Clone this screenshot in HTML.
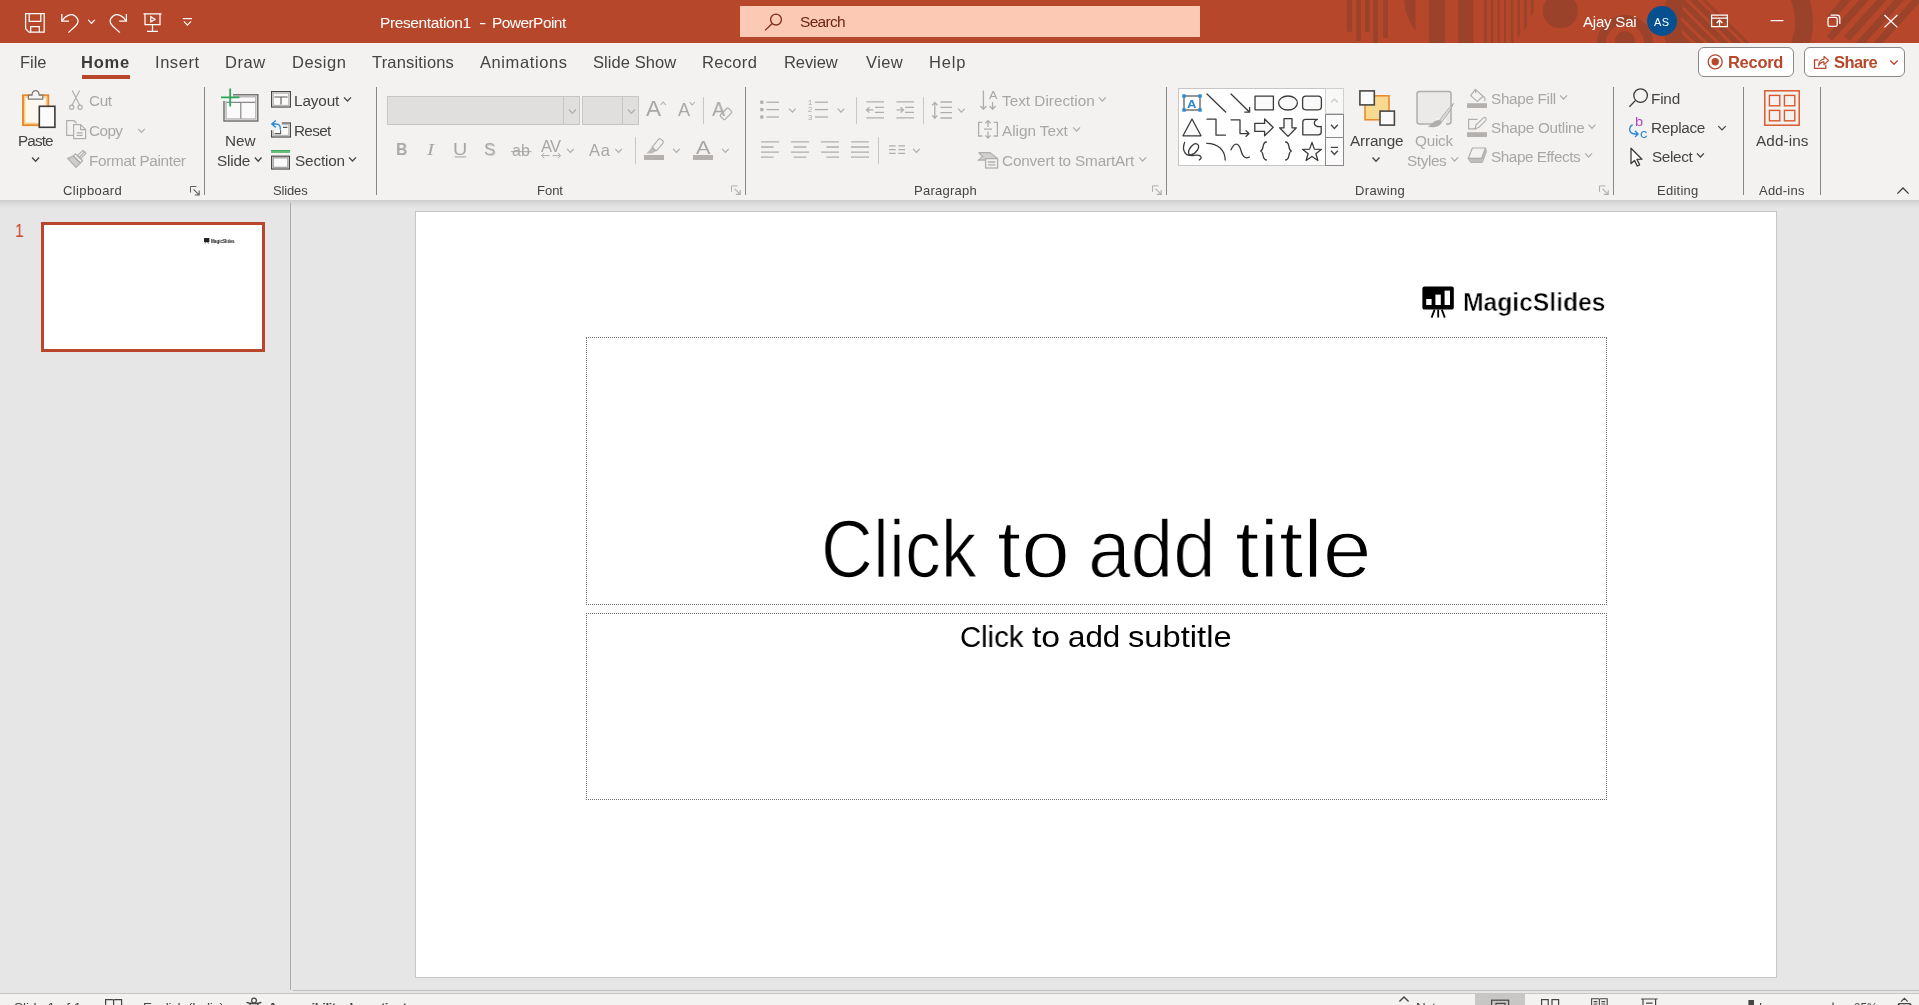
<!DOCTYPE html>
<html lang="en"><head><meta charset="utf-8"><title>Presentation1 - PowerPoint</title>
<style>
html,body{margin:0;padding:0;}
body{width:1919px;height:1005px;overflow:hidden;background:#e6e6e6;font-family:"Liberation Sans",sans-serif;}
#app{position:relative;width:1919px;height:1005px;overflow:hidden;}
.rg{position:absolute;overflow:hidden;}
.t{position:absolute;white-space:pre;line-height:1;color:#444;will-change:transform;}
.ic{position:absolute;left:0;top:0;overflow:visible;}
.bx{position:absolute;box-sizing:border-box;}

</style></head>
<body>
<div id="app">
<div id="titlebar" class="rg" style="left:0px;top:0px;width:1919px;height:43px;background:#b7472a;">
<svg class="ic" width="1919" height="43" viewBox="0 0 1919 43" ><defs><clipPath id="cpRing"><circle cx="1738" cy="22" r="57"/></clipPath></defs><g fill="#9b422b"><rect x="1346.7" y="0" width="5.3" height="31.7"/><rect x="1356.3" y="0" width="4.5" height="41"/><rect x="1365" y="0" width="4.7" height="32"/><rect x="1373.3" y="0" width="4.7" height="43"/><rect x="1383.3" y="0" width="4.7" height="38"/><path d="M1404 0 C1405 12 1409 22 1415.5 30 L1415.5 0 Z"/><rect x="1429" y="0" width="16.0" height="43"/><rect x="1458.3" y="0" width="15.0" height="43"/><rect x="1484" y="0" width="3.0" height="43"/><rect x="1490.8" y="0" width="2.5" height="43"/><rect x="1497.5" y="0" width="2.0" height="43"/><rect x="1504" y="0" width="2.0" height="43"/><rect x="1510.8" y="0" width="2.5" height="43"/><path d="M1517.5 0 H1520 V34 L1517.5 39 Z"/><path d="M1524 0 H1527 V26 L1524 31 Z"/><path d="M1530.8 0 H1533.5 V12 L1530.8 17 Z"/><circle cx="1560.3" cy="10.8" r="17.5"/><path fill-rule="evenodd" d="M1597 43 a28 28 0 0 1 56 0 Z M1606 43 a19 19 0 0 1 38 0 Z"/><circle cx="1625" cy="41" r="10"/><path fill-rule="evenodd" d="M1663 22 a75 75 0 1 0 150 0 a75 75 0 1 0 -150 0 Z M1681 22 a57 57 0 1 0 114 0 a57 57 0 1 0 -114 0 Z"/><g clip-path="url(#cpRing)"><path d="M1600 0 H1706 L1749.5 43 H1600 Z"/><path d="M1647.8 0 l4.4 0 l43.5 43 l-4.4 0 Z" fill="#b7472a"/><path d="M1660.2 0 l4.4 0 l43.5 43 l-4.4 0 Z" fill="#b7472a"/><path d="M1672.6 0 l4.4 0 l43.5 43 l-4.4 0 Z" fill="#b7472a"/><path d="M1685.0 0 l4.4 0 l43.5 43 l-4.4 0 Z" fill="#b7472a"/><path d="M1697.4 0 l4.4 0 l43.5 43 l-4.4 0 Z" fill="#b7472a"/></g><path d="M1851.9 -6 L1830.2 18" fill="none" stroke="#9b422b" stroke-width="7.2"/><path d="M1869.5 -6 L1829.3 38.5" fill="none" stroke="#9b422b" stroke-width="7.2"/><path d="M1887.1 -6 L1846.9 38.5" fill="none" stroke="#9b422b" stroke-width="7.2"/><path d="M1904.7 -6 L1855.9 48" fill="none" stroke="#9b422b" stroke-width="7.2"/><path d="M1922.3 -6 L1873.5 48" fill="none" stroke="#9b422b" stroke-width="7.2"/></g></svg>
<svg class="ic" width="1919" height="43" viewBox="0 0 1919 43" ><g fill="none" stroke="#fff" stroke-width="1.25"><path d="M25.6 13.7 H44.2 V32.2 H29 L25.6 28.8 Z" /><path d="M29.2 13.7 V21.3 H40.8 V13.7"/><path d="M30.7 32.2 V26.6 H39.3 V32.2"/><path d="M61.8 14 V21.2 H69"/><path d="M62 21 C65 15.5 71 13 75 16 C79.5 19.5 78.5 23.5 75.5 26 L68.3 32.6"/><path d="M88.20 19.80 L91.50 23.40 L94.80 19.80" fill="none" stroke="#fff" stroke-width="1.2"/><path d="M126.4 14 V21.2 H119.2"/><path d="M126.2 21 C123.2 15.5 117.2 13 113.2 16 C108.7 19.5 109.7 23.5 112.7 26 L119.9 32.6"/><path d="M143.5 13.8 H161.5 M145 14 V24.6 H160 V14 M152.5 24.6 V31.2 M147 31.4 H158"/><path d="M150.8 16.6 V21.8 L155 19.2 Z"/><path d="M182.8 18.6 H192"/><path d="M183.90 21.30 L187.40 25.10 L190.90 21.30" fill="none" stroke="#fff" stroke-width="1.2"/></g></svg>
<div class="bx" style="left:740px;top:6px;width:460px;height:31px;background:#fcc9b5;"></div>
<svg class="ic" width="1919" height="43" viewBox="0 0 1919 43" ><g fill="none" stroke="#7b2d18" stroke-width="1.3"><circle cx="776" cy="19.6" r="5.4"/><path d="M772 23.8 L765 30.4"/></g></svg>
<div class="bx" style="left:1647px;top:6px;width:30px;height:30px;border-radius:15px;background:#05508f;"></div>
<svg class="ic" width="1919" height="43" viewBox="0 0 1919 43" ><g fill="none" stroke="#fff" stroke-width="1.25"><path d="M1711.6 15.2 H1727.4 V26.6 H1711.6 Z M1711.6 18 H1727.4"/><path d="M1719.5 26 V20.4 M1716.6 23 L1719.5 20.2 L1722.4 23"/><path d="M1770.6 20.6 H1783.4"/><path d="M1828 19 a1.6 1.6 0 0 1 1.6 -1.6 H1835.6 a1.6 1.6 0 0 1 1.6 1.6 V24.8 a1.6 1.6 0 0 1 -1.6 1.6 H1829.6 a1.6 1.6 0 0 1 -1.6 -1.6 Z"/><path d="M1830.6 15.2 H1837 a2.8 2.8 0 0 1 2.8 2.8 V24"/><path d="M1884.4 15 L1897.4 27.4 M1897.4 15 L1884.4 27.4"/></g></svg>
<span class="t" style="left:380.08px;top:14px;font-size:15.5px;line-height:17px;color:#fff;letter-spacing:-0.377px;">Presentation1</span>
<span class="t" style="left:478.77px;top:14px;font-size:15.5px;line-height:17px;color:#fff;transform:scaleX(1.4270);transform-origin:0 0;">-</span>
<span class="t" style="left:492.08px;top:14px;font-size:15.5px;line-height:17px;color:#fff;letter-spacing:-0.564px;">PowerPoint</span>
<span class="t" style="left:800.25px;top:13px;font-size:15.5px;line-height:17px;color:#6a2613;letter-spacing:-0.680px;">Search</span>
<span class="t" style="left:1583.12px;top:13px;font-size:15px;line-height:17px;color:#fff;letter-spacing:-0.198px;">Ajay Sai</span>
<span class="t" style="left:1654.13px;top:16px;font-size:11px;line-height:12px;color:#fff;letter-spacing:0.453px;">AS</span>
</div>
<div id="tabs" class="rg" style="left:0px;top:43px;width:1919px;height:39px;background:#f3f2f1;">
<div class="bx" style="left:82px;top:32px;width:48px;height:4px;background:#b7472a;"></div>
<div class="bx" style="left:1698px;top:4px;width:96px;height:30px;background:#fff;border:1px solid #8a8886;border-radius:6px;"></div>
<div class="bx" style="left:1804px;top:4px;width:101px;height:30px;background:#fff;border:1px solid #8a8886;border-radius:6px;"></div>
<svg class="ic" width="1919" height="39" viewBox="0 43 1919 39" ><circle cx="1715.2" cy="61.8" r="7" fill="none" stroke="#b7472a" stroke-width="1.3"/><circle cx="1715.2" cy="61.8" r="3.7" fill="#b7472a"/><g fill="none" stroke="#b7472a" stroke-width="1.3"><path d="M1818.4 59.9 H1814.5 V68.4 H1825.8 V64.8"/><path d="M1818.6 65.8 C1818.8 61.4 1821 59.3 1824 59.2 V56.4 L1828.6 60.5 L1824 64.6 V61.9 C1821.6 61.9 1819.8 63 1818.6 65.8 Z" stroke-width="1.1" stroke-linejoin="round"/></g><path d="M1890.30 60.50 L1894.00 64.30 L1897.70 60.50" fill="none" stroke="#b7472a" stroke-width="1.3"/></svg>
<span class="t" style="left:20.10px;top:10px;font-size:16.5px;line-height:18px;letter-spacing:-0.033px;">File</span>
<span class="t" style="left:81.25px;top:10px;font-size:16.5px;line-height:18px;color:#3b3a39;font-weight:700;letter-spacing:0.808px;">Home</span>
<span class="t" style="left:154.93px;top:10px;font-size:16.5px;line-height:18px;letter-spacing:0.555px;">Insert</span>
<span class="t" style="left:225.10px;top:10px;font-size:16.5px;line-height:18px;letter-spacing:0.570px;">Draw</span>
<span class="t" style="left:292.10px;top:10px;font-size:16.5px;line-height:18px;letter-spacing:0.493px;">Design</span>
<span class="t" style="left:372.08px;top:10px;font-size:16.5px;line-height:18px;letter-spacing:0.178px;">Transitions</span>
<span class="t" style="left:480.22px;top:10px;font-size:16.5px;line-height:18px;letter-spacing:0.590px;">Animations</span>
<span class="t" style="left:592.50px;top:10px;font-size:16.5px;line-height:18px;letter-spacing:0.073px;">Slide Show</span>
<span class="t" style="left:702.00px;top:10px;font-size:16.5px;line-height:18px;letter-spacing:0.325px;">Record</span>
<span class="t" style="left:783.80px;top:10px;font-size:16.5px;line-height:18px;letter-spacing:-0.077px;">Review</span>
<span class="t" style="left:865.88px;top:10px;font-size:16.5px;line-height:18px;letter-spacing:0.422px;">View</span>
<span class="t" style="left:929.30px;top:10px;font-size:16.5px;line-height:18px;letter-spacing:0.804px;">Help</span>
<span class="t" style="left:1727.65px;top:10px;font-size:16.5px;line-height:18px;color:#b7472a;font-weight:700;letter-spacing:-0.291px;">Record</span>
<span class="t" style="left:1833.87px;top:10px;font-size:16.5px;line-height:18px;color:#b7472a;font-weight:700;letter-spacing:-0.555px;">Share</span>
</div>
<div id="ribbon" class="rg" style="left:0px;top:82px;width:1919px;height:118px;background:#f3f2f1;">
<div class="bx" style="left:204.0px;top:4.5px;width:1px;height:108.5px;background:#8a8886;"></div>
<div class="bx" style="left:376.0px;top:4.5px;width:1px;height:108.5px;background:#8a8886;"></div>
<div class="bx" style="left:745.0px;top:4.5px;width:1px;height:108.5px;background:#8a8886;"></div>
<div class="bx" style="left:1166.0px;top:4.5px;width:1px;height:108.5px;background:#8a8886;"></div>
<div class="bx" style="left:1613.0px;top:4.5px;width:1px;height:108.5px;background:#8a8886;"></div>
<div class="bx" style="left:1743.0px;top:4.5px;width:1px;height:108.5px;background:#8a8886;"></div>
<div class="bx" style="left:1820.0px;top:4.5px;width:1px;height:108.5px;background:#8a8886;"></div>
<div class="bx" style="left:703.0px;top:15px;width:1px;height:27px;background:#c8c6c4;"></div>
<div class="bx" style="left:635.0px;top:55px;width:1px;height:27px;background:#c8c6c4;"></div>
<div class="bx" style="left:856.0px;top:15px;width:1px;height:27px;background:#c8c6c4;"></div>
<div class="bx" style="left:923.0px;top:15px;width:1px;height:27px;background:#c8c6c4;"></div>
<div class="bx" style="left:878.0px;top:55px;width:1px;height:27px;background:#c8c6c4;"></div>
<svg class="ic" width="1919" height="118" viewBox="0 82 1919 118" ><rect x="23" y="95.3" width="25.2" height="29.8" fill="#fdf8ef" stroke="#e8892a" stroke-width="2"/><rect x="24.7" y="97" width="21.8" height="26.4" fill="none" stroke="#f9cf8e" stroke-width="1.5"/><path d="M28.4 99.2 V95.2 H32 C32.2 92.4 33.6 90.7 35.6 90.7 C37.6 90.7 39 92.4 39.2 95.2 H42.8 V99.2 Z" fill="#f6f5f4" stroke="#7a7876" stroke-width="1.2"/><rect x="39.3" y="106.3" width="15.6" height="21" fill="#fafafa" stroke="#3b3a39" stroke-width="1.6"/><path d="M32.10 157.50 L35.60 161.30 L39.10 157.50" fill="none" stroke="#444" stroke-width="1.3"/><g fill="none" stroke="#b0aeac" stroke-width="1.2"><path d="M72.2 90.4 L79.6 105 M79.6 90.4 L72.2 105"/><circle cx="71.7" cy="107.2" r="2.1"/><circle cx="80.1" cy="107.2" r="2.1"/></g><g fill="none" stroke="#b0aeac" stroke-width="1.2"><path d="M73.2 135.4 H66.7 V120.7 H74 L76.6 123.2"/><path d="M73.6 124.6 H80.6 L85.6 129.6 V138.6 H73.6 Z" fill="#f3f2f1"/><path d="M80.6 124.6 V129.6 H85.6 M76.6 132.8 H82.6 M76.6 135.4 H82.6"/></g><path d="M138.20 128.80 L141.50 132.40 L144.80 128.80" fill="none" stroke="#b0aeac" stroke-width="1.2"/><g fill="none" stroke="#b0aeac" stroke-width="1.2" stroke-linejoin="round"><path d="M85.2 151.2 L79.6 157 M83 150.4 L86 153.2 L80.8 158.6 L77.6 155.4 Z"/><path d="M75.4 153.8 L82.6 160.8 L80.4 163 L73.2 156 Z"/><path d="M73.2 156 L67.6 158.4 L76 167.4 L80.4 163 Z" fill="#b0aeac" fill-opacity="0.55"/></g><path d="M190.5 192.5 V186.5 H196.5" fill="none" stroke="#605e5c" stroke-width="1"/><path d="M193.6 189.4 L199 194.8 M194.8 195 H199.2 V190.6" fill="none" stroke="#605e5c" stroke-width="1.1"/><rect x="224" y="94.8" width="33.8" height="26.2" fill="#fafafa" stroke="#6b6967" stroke-width="1.4"/><rect x="226" y="96.8" width="29.8" height="22.2" fill="none" stroke="#b3b1af" stroke-width="1.3"/><path d="M226.6 102.4 H255.2 M240.8 102.4 V118.6" fill="none" stroke="#8a8886" stroke-width="1.2"/><rect x="221" y="89" width="12" height="12" fill="#f3f2f1"/><path d="M230.2 88.6 V106.6 M221 97.4 H239.4" fill="none" stroke="#2ea55b" stroke-width="1.8"/><path d="M254.90 157.50 L258.20 161.30 L261.50 157.50" fill="none" stroke="#444" stroke-width="1.3"/><rect x="271.6" y="91.6" width="18.8" height="15.4" fill="#fafafa" stroke="#4a4846" stroke-width="1.2"/><rect x="273.2" y="93.2" width="15.6" height="12.2" fill="none" stroke="#b5b3b1" stroke-width="1.1"/><path d="M274.4 97 H287.6 M281 97 V104.6" fill="none" stroke="#5c5a58" stroke-width="1.1"/><path d="M344.00 97.40 L347.50 101.00 L351.00 97.40" fill="none" stroke="#444" stroke-width="1.3"/><rect x="271.6" y="123" width="18.8" height="14" fill="#fafafa" stroke="#4a4846" stroke-width="1.2"/><rect x="273.2" y="124.6" width="15.6" height="10.8" fill="none" stroke="#b5b3b1" stroke-width="1.1"/><path d="M283 127.4 H287.4 M274.6 133.6 H280.6 V130" fill="none" stroke="#5c5a58" stroke-width="1.1"/><rect x="270.4" y="119.4" width="11.4" height="10.8" fill="#f3f2f1"/><path d="M275.8 120.4 L271.8 124 L275.8 127.4 M272.2 124 H276.4 C279 124 280.6 126 280.4 129.6" fill="none" stroke="#2b88d8" stroke-width="1.4"/><rect x="271" y="150" width="19" height="3" fill="#6bbf7b"/><rect x="271" y="150" width="19" height="1" fill="#3fa557"/><rect x="271.6" y="156.2" width="17.8" height="12.8" fill="#fafafa" stroke="#4a4846" stroke-width="1.2"/><rect x="273.2" y="157.8" width="14.6" height="9.6" fill="none" stroke="#a5a3a1" stroke-width="1.3"/><path d="M349.00 157.40 L352.50 161.00 L356.00 157.40" fill="none" stroke="#444" stroke-width="1.3"/></svg>
<div class="bx" style="left:387px;top:14px;width:193px;height:29px;background:#e1dfdd;border:1px solid #c8c6c4;"></div>
<div class="bx" style="left:563px;top:15px;width:1px;height:27px;background:#c8c6c4;"></div>
<div class="bx" style="left:582px;top:14px;width:57px;height:29px;background:#e1dfdd;border:1px solid #c8c6c4;"></div>
<div class="bx" style="left:622px;top:15px;width:1px;height:27px;background:#c8c6c4;"></div>
<svg class="ic" width="1919" height="118" viewBox="0 82 1919 118" ><path d="M568.90 109.50 L572.40 113.30 L575.90 109.50" fill="none" stroke="#b0aeac" stroke-width="1.2"/><path d="M627.90 109.50 L631.40 113.30 L634.90 109.50" fill="none" stroke="#b0aeac" stroke-width="1.2"/><path d="M660.6 105 L663.2 102 L665.8 105" fill="none" stroke="#b0aeac" stroke-width="1.1"/><path d="M689.6 102 L692.2 105 L694.8 102" fill="none" stroke="#b0aeac" stroke-width="1.1"/><rect x="720.4" y="110.6" width="11.2" height="6.4" rx="1" transform="rotate(-45 726 113.8)" fill="#f3f2f1" stroke="#b0aeac" stroke-width="1.2"/><path d="M454.6 156.9 H466.2" stroke="#b0aeac" stroke-width="1.2"/><path d="M511 151.6 H531.4" stroke="#b0aeac" stroke-width="1.1"/><path d="M541.6 155.6 H549.6 M552.6 155.6 H560.6 M544.2 153 L541.6 155.6 L544.2 158.2 M558 153 L560.6 155.6 L558 158.2" fill="none" stroke="#b0aeac" stroke-width="1"/><path d="M567.10 148.80 L570.40 152.40 L573.70 148.80" fill="none" stroke="#b0aeac" stroke-width="1.2"/><path d="M615.30 148.80 L618.60 152.40 L621.90 148.80" fill="none" stroke="#b0aeac" stroke-width="1.2"/><rect x="644" y="155" width="20" height="5" fill="#b3b0ad"/><rect x="651.6" y="141.8" width="12.4" height="5.8" rx="1.6" transform="rotate(-50 657.8 144.7)" fill="#f3f2f1" stroke="#b0aeac" stroke-width="1.1"/><path d="M652.6 146.6 L656.8 150.4 L652 153.6 L646.4 153.6 Z" fill="#b0aeac" fill-opacity="0.8"/><path d="M673.10 148.80 L676.40 152.40 L679.70 148.80" fill="none" stroke="#b0aeac" stroke-width="1.2"/><rect x="693" y="155" width="20" height="5" fill="#b3b0ad"/><path d="M722.10 148.80 L725.40 152.40 L728.70 148.80" fill="none" stroke="#b0aeac" stroke-width="1.2"/><path d="M731.5 191.9 V185.9 H737.5" fill="none" stroke="#b0aeac" stroke-width="1"/><path d="M734.6 188.8 L740 194.20000000000002 M735.8 194.4 H740.2 V190.0" fill="none" stroke="#b0aeac" stroke-width="1.1"/></svg>
<svg class="ic" width="1919" height="118" viewBox="0 82 1919 118" ><rect x="760.2" y="100.60000000000001" width="3.2" height="3.2" fill="#b0aeac"/><path d="M766.4 102.2 H779" fill="none" stroke="#b0aeac" stroke-width="1.3"/><rect x="760.2" y="108.0" width="3.2" height="3.2" fill="#b0aeac"/><path d="M766.4 109.6 H779" fill="none" stroke="#b0aeac" stroke-width="1.3"/><rect x="760.2" y="115.4" width="3.2" height="3.2" fill="#b0aeac"/><path d="M766.4 117 H779" fill="none" stroke="#b0aeac" stroke-width="1.3"/><path d="M789.10 108.60 L792.40 112.20 L795.70 108.60" fill="none" stroke="#b0aeac" stroke-width="1.2"/><path d="M815 102.2 H828" fill="none" stroke="#b0aeac" stroke-width="1.3"/><path d="M815 109.6 H828" fill="none" stroke="#b0aeac" stroke-width="1.3"/><path d="M815 117 H828" fill="none" stroke="#b0aeac" stroke-width="1.3"/><path d="M837.70 108.60 L841.00 112.20 L844.30 108.60" fill="none" stroke="#b0aeac" stroke-width="1.2"/><path d="M866.4 101.8 H884 M875 107.4 H884 M875 112.4 H884 M866.4 117.8 H884 M866.6 109.9 H873.4 M869.4 107.2 L866.6 109.9 L869.4 112.6" fill="none" stroke="#b0aeac" stroke-width="1.3"/><path d="M896.4 101.8 H914 M905 107.4 H914 M905 112.4 H914 M896.4 117.8 H914 M896.6 109.9 H903.4 M900.6 107.2 L903.4 109.9 L900.6 112.6" fill="none" stroke="#b0aeac" stroke-width="1.3"/><path d="M940.4 102 H952 M940.4 107.4 H952 M940.4 112.6 H952 M940.4 118 H952 M934.8 102.6 V118 M932.2 105.2 L934.8 102.4 L937.4 105.2 M932.2 115.4 L934.8 118.2 L937.4 115.4" fill="none" stroke="#b0aeac" stroke-width="1.3"/><path d="M958.10 108.60 L961.40 112.20 L964.70 108.60" fill="none" stroke="#b0aeac" stroke-width="1.2"/><path d="M761 141.9 H779 M761 147.0 H773.6 M761 152.1 H779 M761 157.2 H773.6" fill="none" stroke="#b0aeac" stroke-width="1.3"/><path d="M791 141.9 H809 M793.6 147.0 H806.4 M791 152.1 H809 M793.6 157.2 H806.4" fill="none" stroke="#b0aeac" stroke-width="1.3"/><path d="M821 141.9 H839 M826.4 147.0 H839 M821 152.1 H839 M826.4 157.2 H839" fill="none" stroke="#b0aeac" stroke-width="1.3"/><path d="M851 141.9 H869 M851 147.0 H869 M851 152.1 H869 M851 157.2 H869" fill="none" stroke="#b0aeac" stroke-width="1.3"/><path d="M889 145.8 H895.6 M898.4 145.8 H905 M889 149.6 H895.6 M898.4 149.6 H905 M889 153.4 H895.6 M898.4 153.4 H905" fill="none" stroke="#b0aeac" stroke-width="1.3"/><path d="M913.10 148.80 L916.40 152.40 L919.70 148.80" fill="none" stroke="#b0aeac" stroke-width="1.2"/><path d="M983.4 90.6 V109 M980.4 106 L983.4 109.2 L986.4 106 M992.6 102 V109 M989.6 106 L992.6 109.2 L995.6 106" fill="none" stroke="#b0aeac" stroke-width="1.3"/><path d="M1098.90 97.40 L1102.40 101.00 L1105.90 97.40" fill="none" stroke="#b0aeac" stroke-width="1.3"/><path d="M982.4 122.4 H978.6 V136 H982.4 M993.6 122.4 H997.4 V136 H993.6 M984 129.2 H992 M988 120.6 V127 M985.4 123.2 L988 120.6 L990.6 123.2 M988 131.4 V138 M985.4 135.4 L988 138 L990.6 135.4" fill="none" stroke="#b0aeac" stroke-width="1.3"/><path d="M1073.10 127.40 L1076.60 131.00 L1080.10 127.40" fill="none" stroke="#b0aeac" stroke-width="1.3"/><path d="M978.6 152.6 H990 L997.4 158.6 M978.8 152.8 L982.6 156.4 L978.6 160 H985" fill="none" stroke="#b0aeac" stroke-width="1.3"/><path d="M979.4 153 H989.8 L996 158.2 H985.4 V160 H980 L983.2 156.4 Z" fill="#b0aeac" fill-opacity="0.5"/><rect x="985.6" y="158.6" width="12" height="9.4" fill="#f3f2f1" stroke="#b0aeac" stroke-width="1.3"/><path d="M988 162 H995.4 M988 164.8 H995.4" fill="none" stroke="#b0aeac" stroke-width="1.3"/><path d="M1139.10 157.40 L1142.60 161.00 L1146.10 157.40" fill="none" stroke="#b0aeac" stroke-width="1.3"/><path d="M1152.5 191.9 V185.9 H1158.5" fill="none" stroke="#b0aeac" stroke-width="1"/><path d="M1155.6 188.8 L1161 194.20000000000002 M1156.8 194.4 H1161.2 V190.0" fill="none" stroke="#b0aeac" stroke-width="1.1"/></svg>
<div class="bx" style="left:1178px;top:6px;width:166px;height:78px;background:#fff;border:1px solid #c8c6c4;"></div>
<div class="bx" style="left:1325px;top:6px;width:19px;height:26px;background:#f8f8f7;border:1px solid #d2d0ce;"></div>
<div class="bx" style="left:1325px;top:32px;width:19px;height:24px;background:#fafafa;border:1px solid #8a8886;"></div>
<div class="bx" style="left:1325px;top:55px;width:19px;height:29px;background:#fafafa;border:1px solid #8a8886;"></div>
<svg class="ic" width="1919" height="118" viewBox="0 82 1919 118" ><path d="M1331 102.4 L1334.4 99 L1337.8 102.4" fill="none" stroke="#c8c6c4" stroke-width="1.2"/><path d="M1331.00 124.70 L1334.40 128.50 L1337.80 124.70" fill="none" stroke="#444" stroke-width="1.3"/><path d="M1330.8 147.4 H1338" fill="none" stroke="#444" stroke-width="1.2"/><path d="M1331.00 150.70 L1334.40 154.50 L1337.80 150.70" fill="none" stroke="#444" stroke-width="1.3"/><rect x="1184" y="96" width="16" height="14" fill="#fff" stroke="#605e5c" stroke-width="1.3"/><rect x="1182.3" y="94.3" width="3.4" height="3.4" fill="#2b88d8"/><rect x="1198.3" y="94.3" width="3.4" height="3.4" fill="#2b88d8"/><rect x="1182.3" y="108.3" width="3.4" height="3.4" fill="#2b88d8"/><rect x="1198.3" y="108.3" width="3.4" height="3.4" fill="#2b88d8"/><path d="M1207 94 L1225.6 112" fill="none" stroke="#3b3a39" stroke-width="1.3" stroke-linecap="round" stroke-linejoin="round"/><path d="M1231 94 L1249.4 112 M1244.8 112.2 H1249.6 V107.4" fill="none" stroke="#3b3a39" stroke-width="1.3" stroke-linecap="round" stroke-linejoin="round"/><rect x="1255" y="96.2" width="18.4" height="13.6" fill="#fafafa" stroke="#3b3a39" stroke-width="1.3" stroke-linejoin="round"/><ellipse cx="1288" cy="103" rx="9.4" ry="7" fill="#fafafa" stroke="#3b3a39" stroke-width="1.3" stroke-linejoin="round"/><rect x="1302.6" y="96.2" width="18.8" height="13.6" rx="3.2" fill="#fafafa" stroke="#3b3a39" stroke-width="1.3" stroke-linejoin="round"/><path d="M1192 119 L1201 135.8 H1183 Z" fill="#fafafa" stroke="#3b3a39" stroke-width="1.3" stroke-linejoin="round"/><path d="M1207 119.2 H1216 V135.2 H1225.4" fill="none" stroke="#3b3a39" stroke-width="1.3" stroke-linecap="round" stroke-linejoin="round"/><path d="M1231 119.8 H1240 V133.6 H1248.6 M1246 130.8 L1249 133.6 L1246 136.4" fill="none" stroke="#3b3a39" stroke-width="1.3" stroke-linecap="round" stroke-linejoin="round"/><path d="M1254.8 123.4 H1264.6 V119 L1273.2 127.4 L1264.6 135.8 V131.4 H1254.8 Z" fill="#fafafa" stroke="#3b3a39" stroke-width="1.3" stroke-linejoin="round"/><path d="M1284 118.6 H1292 V127.8 H1296.4 L1288 136.4 L1279.6 127.8 H1284 Z" fill="#fafafa" stroke="#3b3a39" stroke-width="1.3" stroke-linejoin="round"/><path d="M1302.8 122.2 Q1302.8 119.4 1305.6 119.4 H1317.4 C1312.4 121.6 1313.6 127.6 1321.2 126.4 V132 Q1321.2 134.8 1318.4 134.8 H1302.8 Z" fill="#fafafa" stroke="#3b3a39" stroke-width="1.3" stroke-linejoin="round"/><path d="M1184.6 142.4 C1181.6 150 1185.4 156.4 1190.6 155 C1196.8 153.2 1200.6 146.6 1197.4 144.2 C1194.4 142 1188.2 148.2 1188.6 152.8 C1189 158.6 1197 152.8 1200.6 156.2 C1202 157.6 1200.4 159.4 1199.2 160" fill="none" stroke="#3b3a39" stroke-width="1.3" stroke-linecap="round" stroke-linejoin="round"/><path d="M1206.8 143.4 C1218 143.6 1225 150 1225.2 160" fill="none" stroke="#3b3a39" stroke-width="1.3" stroke-linecap="round" stroke-linejoin="round"/><path d="M1231 149.8 C1234.4 142 1238.6 142.4 1240.8 150 C1243 158.2 1246.4 159 1249.4 157" fill="none" stroke="#3b3a39" stroke-width="1.3" stroke-linecap="round" stroke-linejoin="round"/><path d="M1266.4 142 C1261.6 142 1264.6 149.4 1260.6 151 C1264.6 152.6 1261.6 160 1266.4 160" fill="none" stroke="#3b3a39" stroke-width="1.3" stroke-linecap="round" stroke-linejoin="round"/><path d="M1285.6 142 C1290.4 142 1287.4 149.4 1291.4 151 C1287.4 152.6 1290.4 160 1285.6 160" fill="none" stroke="#3b3a39" stroke-width="1.3" stroke-linecap="round" stroke-linejoin="round"/><path d="M1312.0 142.4 L1314.4 149.1 L1321.5 149.3 L1315.9 153.7 L1317.9 160.5 L1312.0 156.5 L1306.1 160.5 L1308.1 153.7 L1302.5 149.3 L1309.6 149.1 Z" fill="#fafafa" stroke="#3b3a39" stroke-width="1.3" stroke-linejoin="round"/><rect x="1365" y="95.8" width="24" height="24" fill="#f9d88f" stroke="#e8852a" stroke-width="1.5"/><rect x="1359.9" y="90.9" width="14.4" height="14" fill="#fafafa" stroke="#4a4846" stroke-width="1.6"/><rect x="1380" y="111.1" width="14.4" height="14" fill="#fafafa" stroke="#4a4846" stroke-width="1.6"/><path d="M1372.50 157.50 L1376.00 161.30 L1379.50 157.50" fill="none" stroke="#444" stroke-width="1.3"/><rect x="1417" y="91.4" width="34" height="32.6" rx="2.4" fill="#ebeae9" stroke="#b0aeac" stroke-width="1.5"/><rect x="1436" y="118" width="10" height="8" fill="#f3f2f1"/><path d="M1453.4 103.4 C1449 108 1443.6 114.6 1439.6 120.4 L1441.6 122 C1446 116.6 1451.4 109.6 1453.4 103.4 Z" fill="#dddbd9" stroke="#b0aeac" stroke-width="1"/><path d="M1439.4 119.8 L1442 122 C1440.4 126.4 1433.6 128.6 1427.4 126.6 C1431.8 125.4 1432.2 120.6 1439.4 119.8 Z" fill="#b0aeac"/><path d="M1451.10 157.40 L1454.60 161.00 L1458.10 157.40" fill="none" stroke="#b0aeac" stroke-width="1.3"/><rect x="1467" y="103.2" width="20" height="4.8" fill="#b3b0ad"/><path d="M1475.4 89.4 L1483 96.2 L1477.4 101.4 L1470.6 95.6 Z M1475.6 89.4 V93 M1483 96.2 C1485 97.2 1485.4 99 1484.6 101" fill="none" stroke="#b0aeac" stroke-width="1.2" stroke-linejoin="round"/><path d="M1560.10 95.40 L1563.60 99.00 L1567.10 95.40" fill="none" stroke="#b0aeac" stroke-width="1.3"/><rect x="1467" y="132.2" width="20" height="4.8" fill="#b3b0ad"/><path d="M1476.6 128.8 H1468.6 V119.4 H1477.6" fill="none" stroke="#b0aeac" stroke-width="1.2"/><path d="M1475 128.8 L1476 125 L1483.4 117.8 Q1484.6 116.8 1485.8 118 Q1486.8 119.2 1485.8 120.4 L1478.6 127.6 Z" fill="#f3f2f1" stroke="#b0aeac" stroke-width="1.1" stroke-linejoin="round"/><path d="M1588.50 124.60 L1592.00 128.20 L1595.50 124.60" fill="none" stroke="#b0aeac" stroke-width="1.3"/><path d="M1472.4 148 H1485.6 L1481.6 158.4 H1468.2 Z" fill="#f3f2f1" stroke="#b0aeac" stroke-width="1.2" stroke-linejoin="round"/><path d="M1468.2 158.4 H1481.6 L1485.6 148 L1486.4 151.6 L1482.4 162.4 H1470.6 Z" fill="#b0aeac" fill-opacity="0.75" stroke="#b0aeac" stroke-width="1" stroke-linejoin="round"/><path d="M1585.10 153.40 L1588.60 157.00 L1592.10 153.40" fill="none" stroke="#b0aeac" stroke-width="1.3"/><path d="M1599.5 191.9 V185.9 H1605.5" fill="none" stroke="#b0aeac" stroke-width="1"/><path d="M1602.6 188.8 L1608 194.20000000000002 M1603.8 194.4 H1608.2 V190.0" fill="none" stroke="#b0aeac" stroke-width="1.1"/></svg>
<svg class="ic" width="1919" height="118" viewBox="0 82 1919 118" ><circle cx="1640.6" cy="95.6" r="6.8" fill="none" stroke="#3b3a39" stroke-width="1.3"/><path d="M1635.6 100.4 L1629.4 106.8" fill="none" stroke="#3b3a39" stroke-width="1.3"/><path d="M1632.6 124.6 C1629.4 126.4 1628.6 130.4 1631 132.6 C1632.4 133.8 1634 134 1637.6 134 M1635 130.8 L1638 134 L1635 137" fill="none" stroke="#2b88d8" stroke-width="1.4"/><path d="M1631 148.2 V163.6 L1634.6 160.4 L1637.2 166 L1639.6 164.8 L1637 159.4 L1642 159.2 Z" fill="#fff" stroke="#3b3a39" stroke-width="1.3" stroke-linejoin="round"/><path d="M1718.30 126.10 L1722.00 129.90 L1725.70 126.10" fill="none" stroke="#444" stroke-width="1.3"/><path d="M1696.90 153.40 L1700.40 157.00 L1703.90 153.40" fill="none" stroke="#444" stroke-width="1.3"/><rect x="1764.8" y="90.8" width="34.4" height="34.4" fill="none" stroke="#d85a2c" stroke-width="1.5"/><rect x="1769.4" y="95.4" width="10.4" height="10.4" fill="none" stroke="#d85a2c" stroke-width="1.4"/><rect x="1784.4" y="95.4" width="10.4" height="10.4" fill="none" stroke="#d85a2c" stroke-width="1.4"/><rect x="1769.4" y="110.4" width="10.4" height="10.4" fill="none" stroke="#d85a2c" stroke-width="1.4"/><rect x="1784.4" y="110.4" width="10.4" height="10.4" fill="none" stroke="#d85a2c" stroke-width="1.4"/><path d="M1897.4 193.6 L1903 188 L1908.6 193.6" fill="none" stroke="#3b3a39" stroke-width="1.3"/></svg>
<span class="t" style="left:18.09px;top:50px;font-size:15.3px;line-height:17px;letter-spacing:-0.895px;">Paste</span>
<span class="t" style="left:89.37px;top:10px;font-size:15.3px;line-height:17px;color:#a9a7a5;letter-spacing:-0.358px;">Cut</span>
<span class="t" style="left:89.37px;top:40px;font-size:15.3px;line-height:17px;color:#a9a7a5;letter-spacing:-0.568px;">Copy</span>
<span class="t" style="left:89.19px;top:70px;font-size:15.3px;line-height:17px;color:#a9a7a5;letter-spacing:-0.327px;">Format Painter</span>
<span class="t" style="left:62.69px;top:101px;font-size:13px;line-height:15px;letter-spacing:0.394px;">Clipboard</span>
<span class="t" style="left:225.19px;top:50px;font-size:15.3px;line-height:17px;letter-spacing:0.008px;">New</span>
<span class="t" style="left:216.76px;top:70px;font-size:15.3px;line-height:17px;letter-spacing:-0.185px;">Slide</span>
<span class="t" style="left:294.19px;top:10px;font-size:15.3px;line-height:17px;letter-spacing:-0.132px;">Layout</span>
<span class="t" style="left:294.19px;top:40px;font-size:15.3px;line-height:17px;letter-spacing:-0.673px;">Reset</span>
<span class="t" style="left:294.76px;top:70px;font-size:15.3px;line-height:17px;letter-spacing:-0.156px;">Section</span>
<span class="t" style="left:272.66px;top:101px;font-size:13px;line-height:15px;letter-spacing:-0.149px;">Slides</span>
<span class="t" style="left:395.50px;top:58px;font-size:17px;line-height:19px;color:#a9a7a5;font-weight:700;transform:scaleX(0.9260);transform-origin:0 0;">B</span>
<span class="t" style="left:427.23px;top:58px;font-size:17px;line-height:19px;color:#a9a7a5;transform:scaleX(1.2516);transform-origin:0 0;font-family:'Liberation Serif',serif;font-style:italic;">I</span>
<span class="t" style="left:453.43px;top:58px;font-size:16.5px;line-height:18px;color:#a9a7a5;transform:scaleX(1.1953);transform-origin:0 0;">U</span>
<span class="t" style="left:484.39px;top:58px;font-size:17px;line-height:19px;color:#a9a7a5;transform:scaleX(0.9809);transform-origin:0 0;text-shadow:1px 1px 0 #d2d0ce;">S</span>
<span class="t" style="left:512.47px;top:60px;font-size:16px;line-height:17px;color:#a9a7a5;letter-spacing:0.155px;">ab</span>
<span class="t" style="left:541.32px;top:55px;font-size:16.5px;line-height:18px;color:#a9a7a5;letter-spacing:-0.681px;">AV</span>
<span class="t" style="left:589.12px;top:59px;font-size:16.5px;line-height:18px;color:#a9a7a5;letter-spacing:0.850px;">Aa</span>
<span class="t" style="left:646.11px;top:15px;font-size:21.5px;line-height:24px;color:#a9a7a5;transform:scaleX(1.0522);transform-origin:0 0;">A</span>
<span class="t" style="left:678.11px;top:18px;font-size:17.5px;line-height:20px;color:#a9a7a5;transform:scaleX(1.0341);transform-origin:0 0;">A</span>
<span class="t" style="left:712.11px;top:15px;font-size:21px;line-height:23px;color:#a9a7a5;transform:scaleX(0.9336);transform-origin:0 0;">A</span>
<span class="t" style="left:696.11px;top:55px;font-size:18.5px;line-height:21px;color:#a9a7a5;transform:scaleX(1.1739);transform-origin:0 0;">A</span>
<span class="t" style="left:537.48px;top:101px;font-size:13px;line-height:15px;letter-spacing:-0.017px;">Font</span>
<span class="t" style="left:807.78px;top:16px;font-size:7.5px;line-height:9px;color:#a9a7a5;">1</span>
<span class="t" style="left:807.97px;top:23px;font-size:7.5px;line-height:9px;color:#a9a7a5;">2</span>
<span class="t" style="left:808.06px;top:31px;font-size:7.5px;line-height:9px;color:#a9a7a5;">3</span>
<span class="t" style="left:988.73px;top:7px;font-size:11.5px;line-height:12px;color:#a9a7a5;transform:scaleX(1.1016);transform-origin:0 0;">A</span>
<span class="t" style="left:1002.11px;top:10px;font-size:15.3px;line-height:17px;color:#a9a7a5;letter-spacing:0.006px;">Text Direction</span>
<span class="t" style="left:1002.42px;top:40px;font-size:15.3px;line-height:17px;color:#a9a7a5;letter-spacing:-0.031px;">Align Text</span>
<span class="t" style="left:1001.67px;top:70px;font-size:15.3px;line-height:17px;color:#a9a7a5;letter-spacing:-0.160px;">Convert to SmartArt</span>
<span class="t" style="left:913.88px;top:101px;font-size:13px;line-height:15px;letter-spacing:0.263px;">Paragraph</span>
<span class="t" style="left:1187.42px;top:16px;font-size:11.5px;line-height:12px;color:#2b88d8;font-weight:700;transform:scaleX(1.1406);transform-origin:0 0;">A</span>
<span class="t" style="left:1349.92px;top:50px;font-size:15.3px;line-height:17px;letter-spacing:-0.135px;">Arrange</span>
<span class="t" style="left:1415.23px;top:50px;font-size:15.3px;line-height:17px;color:#a9a7a5;letter-spacing:-0.250px;">Quick</span>
<span class="t" style="left:1407.26px;top:70px;font-size:15.3px;line-height:17px;color:#a9a7a5;letter-spacing:-0.402px;">Styles</span>
<span class="t" style="left:1490.76px;top:8px;font-size:15.3px;line-height:17px;color:#a9a7a5;letter-spacing:-0.323px;">Shape Fill</span>
<span class="t" style="left:1490.76px;top:37px;font-size:15.3px;line-height:17px;color:#a9a7a5;letter-spacing:-0.265px;">Shape Outline</span>
<span class="t" style="left:1490.76px;top:66px;font-size:15.3px;line-height:17px;color:#a9a7a5;letter-spacing:-0.443px;">Shape Effects</span>
<span class="t" style="left:1354.88px;top:101px;font-size:13px;line-height:15px;letter-spacing:0.353px;">Drawing</span>
<span class="t" style="left:1634.60px;top:33px;font-size:12.5px;line-height:14px;color:#b146c2;transform:scaleX(1.1741);transform-origin:0 0;">b</span>
<span class="t" style="left:1639.52px;top:45px;font-size:12.5px;line-height:14px;color:#2b88d8;transform:scaleX(1.1875);transform-origin:0 0;">c</span>
<span class="t" style="left:1651.19px;top:8px;font-size:15.3px;line-height:17px;letter-spacing:-0.205px;">Find</span>
<span class="t" style="left:1651.19px;top:37px;font-size:15.3px;line-height:17px;letter-spacing:-0.298px;">Replace</span>
<span class="t" style="left:1651.76px;top:66px;font-size:15.3px;line-height:17px;letter-spacing:-0.362px;">Select</span>
<span class="t" style="left:1657.38px;top:101px;font-size:13px;line-height:15px;letter-spacing:0.259px;">Editing</span>
<span class="t" style="left:1756.42px;top:50px;font-size:15.3px;line-height:17px;letter-spacing:0.103px;">Add-ins</span>
<span class="t" style="left:1758.92px;top:101px;font-size:13px;line-height:15px;letter-spacing:0.219px;">Add-ins</span>
</div>
<div id="work" class="rg" style="left:0px;top:200px;width:1919px;height:793px;background:#e6e6e6;">
<div class="bx" style="left:0;top:0;width:1919px;height:9px;background:linear-gradient(#cecdcc,#d9d9d9 35%,#e2e2e2 70%,#e6e6e6);"></div>
<div class="bx" style="left:290px;top:3px;width:1px;height:787px;background:#ababab;"></div>
<div class="bx" style="left:293px;top:790px;width:1626px;height:1px;background:#c0c0c0;"></div>
<div class="bx" style="left:41px;top:22px;width:224px;height:130px;background:#fff;border:3px solid #b9462a;"></div>
<svg class="ic" width="1919" height="793" viewBox="0 200 1919 793" ><rect x="204" y="238" width="5.4" height="4.2" rx="0.6" fill="#222"/><path d="M205.6 242.2 L205 243.6 M207.8 242.2 L208.4 243.6" stroke="#222" stroke-width="0.6"/></svg>
<div id="slide" class="bx" style="left:415px;top:11px;width:1362px;height:767px;background:#fff;border:1px solid #c6c6c6;"></div>
<div class="bx" style="left:586px;top:137px;width:1021px;height:268px;border:1px dotted #6e6e6e;"></div>
<div class="bx" style="left:586px;top:413px;width:1021px;height:187px;border:1px dotted #6e6e6e;"></div>
<svg class="ic" width="1919" height="793" viewBox="0 200 1919 793" ><path d="M1424.6 286.4 H1451.6 Q1453.8 286.4 1453.8 288.6 V307.4 Q1453.8 309.6 1451.6 309.6 H1424.6 Q1422.4 309.6 1422.4 307.4 V288.6 Q1422.4 286.4 1424.6 286.4 Z" fill="#000"/><rect x="1426.2" y="299" width="5.4" height="6" fill="#fff"/><rect x="1435.4" y="294.6" width="5.4" height="10.4" fill="#fff"/><rect x="1444.6" y="290.6" width="5.4" height="14.4" fill="#fff"/><path d="M1434.6 309.6 L1431.6 317.6 M1438.2 309.6 V317.6 M1441.8 309.6 L1444.8 317.6" fill="none" stroke="#000" stroke-width="1.8"/></svg>
<span class="t" style="left:15.15px;top:20px;font-size:18.5px;line-height:21px;color:#c8492a;transform:scaleX(0.8525);transform-origin:0 0;">1</span>
<span class="t" style="left:210.88px;top:39px;font-size:4.6px;line-height:5px;color:#111;font-weight:700;transform:scaleX(0.8828);transform-origin:0 0;">MagicSlides</span>
<span class="t" style="left:1463.10px;top:88px;font-size:25px;line-height:28px;color:#000;font-weight:700;transform:scaleX(0.9859);transform-origin:0 0;-webkit-text-stroke:0.5px #fff;">MagicSlides</span>
<span class="t" style="left:820.90px;top:304px;font-size:81px;line-height:90px;color:#000;transform:scaleX(0.8881);transform-origin:0 0;-webkit-text-stroke:1.4px #fff;">Click</span>
<span class="t" style="left:997.03px;top:304px;font-size:81px;line-height:90px;color:#000;transform:scaleX(1.0791);transform-origin:0 0;-webkit-text-stroke:1.4px #fff;">to</span>
<span class="t" style="left:1087.89px;top:304px;font-size:81px;line-height:90px;color:#000;transform:scaleX(0.9464);transform-origin:0 0;-webkit-text-stroke:1.4px #fff;">add</span>
<span class="t" style="left:1234.82px;top:304px;font-size:81px;line-height:90px;color:#000;transform:scaleX(1.0840);transform-origin:0 0;-webkit-text-stroke:1.4px #fff;">title</span>
<span class="t" style="left:959.97px;top:420px;font-size:29.5px;line-height:33px;color:#000;transform:scaleX(0.9911);transform-origin:0 0;">Click</span>
<span class="t" style="left:1032.04px;top:420px;font-size:29.5px;line-height:33px;color:#000;transform:scaleX(1.1432);transform-origin:0 0;">to</span>
<span class="t" style="left:1067.92px;top:420px;font-size:29.5px;line-height:33px;color:#000;transform:scaleX(1.0615);transform-origin:0 0;">add</span>
<span class="t" style="left:1127.74px;top:420px;font-size:29.5px;line-height:33px;color:#000;transform:scaleX(1.1091);transform-origin:0 0;">subtitle</span>
</div>
<div id="status" class="rg" style="left:0px;top:993px;width:1919px;height:12px;background:#f3f2f1;">
<div class="bx" style="left:0;top:0;width:1919px;height:1px;background:#c8c6c4;"></div>
<div class="bx" style="left:1475px;top:1px;width:50px;height:11px;background:#c8c6c4;"></div>
<svg class="ic" width="1919" height="12" viewBox="0 993 1919 12" ><path d="M105.6 1008 V999.6 H112.6 Q113.6 999.6 113.6 1000.6 V1008 M113.6 1000.6 Q113.6 999.6 114.6 999.6 H121.6 V1008" fill="none" stroke="#444" stroke-width="1.2"/><circle cx="254" cy="1000.6" r="2.4" fill="none" stroke="#444" stroke-width="1.2"/><path d="M246.6 1002.4 C249.6 1004 258.4 1004 261.4 1002.4 M250 1004 V1010 M258 1004 V1010" fill="none" stroke="#444" stroke-width="1.2"/><path d="M1399.4 1001.4 L1404 997 L1408.6 1001.4" fill="none" stroke="#444" stroke-width="1.4"/><rect x="1491.6" y="1000.2" width="17" height="12" fill="none" stroke="#444" stroke-width="1.2"/><rect x="1496" y="1003.4" width="9" height="8" fill="none" stroke="#444" stroke-width="1.2"/><rect x="1541.6" y="999.6" width="6.6" height="6.6" fill="none" stroke="#444" stroke-width="1.2"/><rect x="1552" y="999.6" width="6.6" height="6.6" fill="none" stroke="#444" stroke-width="1.2"/><path d="M1591.6 1008 V998.8 H1598.4 Q1599.4 998.8 1599.4 999.8 V1008 M1599.4 999.8 Q1599.4 998.8 1600.4 998.8 H1607.2 V1008 M1593.6 1001.6 H1597.4 M1593.6 1004 H1597.4 M1601.4 1001.6 H1605.2 M1601.4 1004 H1605.2" fill="none" stroke="#444" stroke-width="1.1"/><path d="M1641 999 H1657.6 M1643 999 V1008 M1655.6 999 V1008 M1646 1003.2 H1652.6" fill="none" stroke="#444" stroke-width="1.2"/><rect x="1748.4" y="1000" width="5.6" height="8" fill="#444"/><path d="M1760.6 1003 V1008 M1833 1002.4 V1008" stroke="#444" stroke-width="1.2"/><path d="M1901 1001.6 L1904.4 998.4 L1907.8 1001.6 M1899 1008 V1003.6 H1910 V1008 M1897 1006 L1899 1004 M1912 1006 L1910 1004" fill="none" stroke="#444" stroke-width="1.2"/></svg>
<span class="t" style="left:13.54px;top:7px;font-size:13.5px;line-height:15px;letter-spacing:-0.025px;">Slide 1 of 1</span>
<span class="t" style="left:143.04px;top:7px;font-size:13.5px;line-height:15px;letter-spacing:-0.382px;">English (India)</span>
<span class="t" style="left:267.81px;top:7px;font-size:13.5px;line-height:15px;font-weight:700;letter-spacing:-0.621px;">Accessibility: Investigate</span>
<span class="t" style="left:1415.54px;top:7px;font-size:13.5px;line-height:15px;letter-spacing:-0.668px;">Notes</span>
<span class="t" style="left:1854.34px;top:7px;font-size:13.5px;line-height:15px;transform:scaleX(0.8670);transform-origin:0 0;">85%</span>
</div>
</div>
</body></html>
